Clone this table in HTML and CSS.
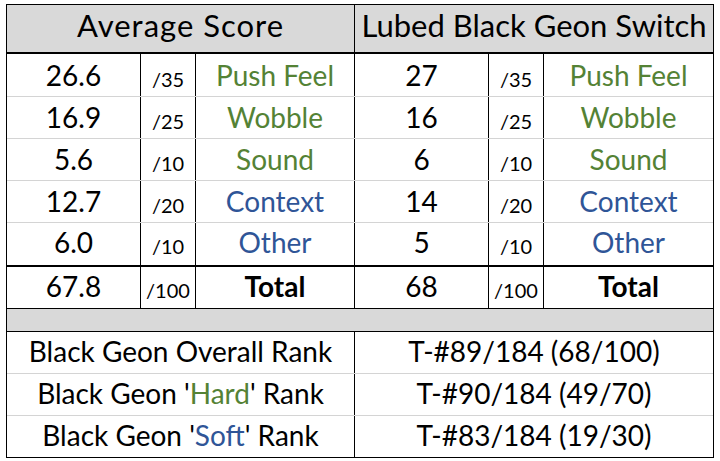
FILE: index.html
```html
<!DOCTYPE html>
<html>
<head>
<meta charset="utf-8">
<link rel="stylesheet" href="styles.css">
</head>
<body>
<div class="sheet">
  <div class="hdr">
    <div class="hcell sep wide">Average Score</div>
    <div class="hcell">Lubed Black Geon Switch</div>
  </div>
  <div class="row first">
    <div class="c num">26.6</div><div class="c max">/35</div><div class="c lbl green sep">Push Feel</div>
    <div class="c num">27</div><div class="c max">/35</div><div class="c lbl green">Push Feel</div>
  </div>
  <div class="row">
    <div class="c num">16.9</div><div class="c max">/25</div><div class="c lbl green sep">Wobble</div>
    <div class="c num">16</div><div class="c max">/25</div><div class="c lbl green">Wobble</div>
  </div>
  <div class="row">
    <div class="c num">5.6</div><div class="c max">/10</div><div class="c lbl green sep">Sound</div>
    <div class="c num">6</div><div class="c max">/10</div><div class="c lbl green">Sound</div>
  </div>
  <div class="row">
    <div class="c num">12.7</div><div class="c max">/20</div><div class="c lbl blue sep">Context</div>
    <div class="c num">14</div><div class="c max">/20</div><div class="c lbl blue">Context</div>
  </div>
  <div class="row last">
    <div class="c num">6.0</div><div class="c max">/10</div><div class="c lbl blue sep">Other</div>
    <div class="c num">5</div><div class="c max">/10</div><div class="c lbl blue">Other</div>
  </div>
  <div class="row total">
    <div class="c num">67.8</div><div class="c max">/100</div><div class="c lbl bold sep">Total</div>
    <div class="c num">68</div><div class="c max">/100</div><div class="c lbl bold">Total</div>
  </div>
  <div class="spacer"></div>
  <div class="rank">
    <div class="rc sep">Black Geon Overall Rank</div>
    <div class="rc">T-#89/184 (68/100)</div>
  </div>
  <div class="rank">
    <div class="rc sep">Black Geon '<span class="green">Hard</span>' Rank</div>
    <div class="rc">T-#90/184 (49/70)</div>
  </div>
  <div class="rank end">
    <div class="rc sep">Black Geon '<span class="blue">Soft</span>' Rank</div>
    <div class="rc">T-#83/184 (19/30)</div>
  </div>
</div>
</body>
</html>
```

FILE: styles.css
```css
* { box-sizing: border-box; }
html, body { margin: 0; padding: 0; background: #fff; }
body { font-family: Lato, "Liberation Sans", sans-serif; color: #000; line-height: 1.2; }

.sheet {
  margin: 4px 0 0 6px;
  width: 708px;
  border: 1px solid #000;
}

.hdr {
  display: grid;
  grid-template-columns: 348px 358px;
  height: 49px;
  background: #d9d9d9;
  border-bottom: 2px solid #000;
}
.hcell {
  display: flex;
  align-items: flex-start;
  justify-content: center;
  font-size: 31px;
  padding-top: 2px;
  white-space: nowrap;
}
.hcell.wide { letter-spacing: 1px; }

.sep { border-right: 1px solid #000; }

.row {
  display: grid;
  grid-template-columns: 134px 55px 159px 134px 55px 169px;
  height: 42px;
  border-bottom: 1px solid #d4d4d4;
  --p: 4px;
}
.row.first { height: 43px; --p: 5px; }
.row.last { height: 44px; border-bottom: 2px solid #000; --p: 3px; }
.row.total { height: 42px; border-bottom: 1px solid #000; --p: 3px; }

.c {
  display: flex;
  align-items: flex-start;
  justify-content: center;
  padding-top: var(--p);
  white-space: nowrap;
}
.c.num, .c.max { border-right: 1px solid #000; }
.num { font-size: 28px; }
.max { font-size: 20px; padding-top: calc(var(--p) + 8px); }
.lbl { font-size: 28px; }
.bold { font-weight: 700; }

.green { color: #548235; }
.blue { color: #2f5597; }

.spacer {
  height: 23px;
  background: #d9d9d9;
  border-bottom: 1px solid #000;
}

.rank {
  display: grid;
  grid-template-columns: 348px 358px;
  height: 42px;
  border-bottom: 1px solid #d4d4d4;
}
.rank.end { height: 41px; border-bottom: 0; }
.rc {
  display: flex;
  align-items: flex-start;
  justify-content: center;
  font-size: 28px;
  padding-top: 3px;
  white-space: nowrap;
}
```
